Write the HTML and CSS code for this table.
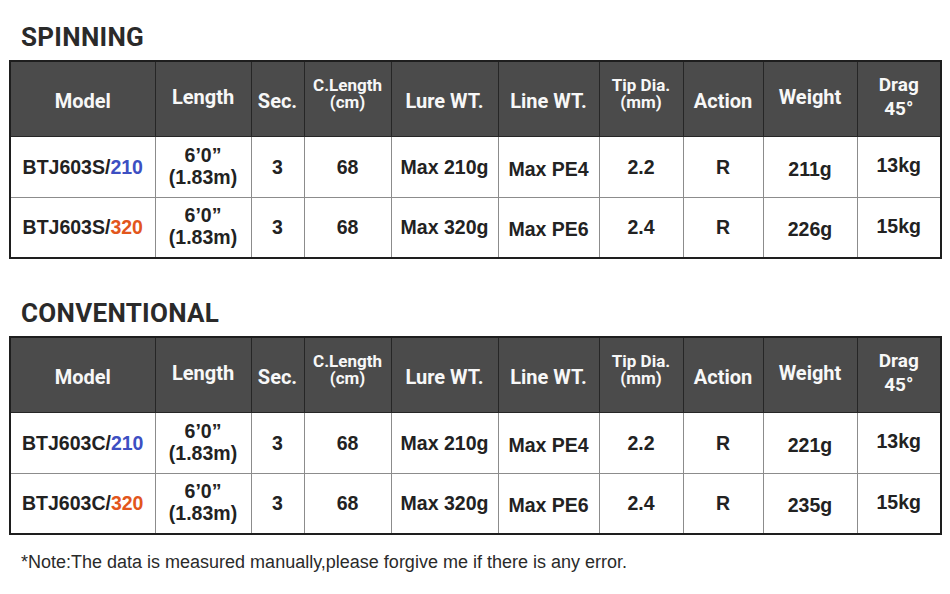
FILE: index.html
```html
<!DOCTYPE html>
<html>
<head>
<meta charset="utf-8">
<link rel="stylesheet" href="styles.css">
</head>
<body>
<div class="page">
  <section class="block">
    <h2 class="title">SPINNING</h2>
    <table class="spec">
      <colgroup>
        <col class="c-model"><col class="c-len"><col class="c-sec"><col class="c-clen"><col class="c-lure">
        <col class="c-line"><col class="c-tip"><col class="c-act"><col class="c-wt"><col class="c-drag">
      </colgroup>
      <thead>
        <tr>
          <th>Model</th>
          <th class="up">Length</th>
          <th>Sec.</th>
          <th class="two">C.Length<br>(cm)</th>
          <th>Lure WT.</th>
          <th>Line WT.</th>
          <th class="two">Tip Dia.<br>(mm)</th>
          <th>Action</th>
          <th class="up">Weight</th>
          <th class="drag">Drag<br>45°</th>
        </tr>
      </thead>
      <tbody>
        <tr>
          <td>BTJ603S/<span class="blue">210</span></td>
          <td class="len">6’0”<br>(1.83m)</td>
          <td>3</td>
          <td>68</td>
          <td>Max 210g</td>
          <td class="dn">Max PE4</td>
          <td>2.2</td>
          <td>R</td>
          <td class="dn">211g</td>
          <td class="up">13kg</td>
        </tr>
        <tr>
          <td>BTJ603S/<span class="orange">320</span></td>
          <td class="len">6’0”<br>(1.83m)</td>
          <td>3</td>
          <td>68</td>
          <td>Max 320g</td>
          <td class="dn">Max PE6</td>
          <td>2.4</td>
          <td>R</td>
          <td class="dn">226g</td>
          <td class="up">15kg</td>
        </tr>
      </tbody>
    </table>
  </section>

  <section class="block second">
    <h2 class="title">CONVENTIONAL</h2>
    <table class="spec">
      <colgroup>
        <col class="c-model"><col class="c-len"><col class="c-sec"><col class="c-clen"><col class="c-lure">
        <col class="c-line"><col class="c-tip"><col class="c-act"><col class="c-wt"><col class="c-drag">
      </colgroup>
      <thead>
        <tr>
          <th>Model</th>
          <th class="up">Length</th>
          <th>Sec.</th>
          <th class="two">C.Length<br>(cm)</th>
          <th>Lure WT.</th>
          <th>Line WT.</th>
          <th class="two">Tip Dia.<br>(mm)</th>
          <th>Action</th>
          <th class="up">Weight</th>
          <th class="drag">Drag<br>45°</th>
        </tr>
      </thead>
      <tbody>
        <tr>
          <td>BTJ603C/<span class="blue">210</span></td>
          <td class="len">6’0”<br>(1.83m)</td>
          <td>3</td>
          <td>68</td>
          <td>Max 210g</td>
          <td class="dn">Max PE4</td>
          <td>2.2</td>
          <td>R</td>
          <td class="dn">221g</td>
          <td class="up">13kg</td>
        </tr>
        <tr>
          <td>BTJ603C/<span class="orange">320</span></td>
          <td class="len">6’0”<br>(1.83m)</td>
          <td>3</td>
          <td>68</td>
          <td>Max 320g</td>
          <td class="dn">Max PE6</td>
          <td>2.4</td>
          <td>R</td>
          <td class="dn">235g</td>
          <td class="up">15kg</td>
        </tr>
      </tbody>
    </table>
  </section>

  <p class="note">*Note:The data is measured manually,please forgive me if there is any error.</p>
</div>
</body>
</html>
```

FILE: styles.css
```css
* { box-sizing: border-box; }
html, body { margin: 0; padding: 0; background: #fff; }
.page {
  width: 950px;
  height: 594px;
  padding: 22px 0 0 9px;
  display: flex;
  flex-direction: column;
}
.block { display: flex; flex-direction: column; }
.second { margin-top: 39px; }
.title {
  margin: 0 0 8px 12px;
  font-family: Roboto, "Noto Sans", sans-serif;
  font-weight: 700;
  font-size: 26px;
  line-height: 30px;
  color: #2a2a2a;
  letter-spacing: 0.3px;
}
.spec {
  width: 931px;
  table-layout: fixed;
  border-collapse: collapse;
  border: 2px solid #1e1e1e;
}
.c-model { width: 145px; }
.c-len { width: 96px; }
.c-sec { width: 53px; }
.c-clen { width: 87px; }
.c-lure { width: 107px; }
.c-line { width: 101px; }
.c-tip { width: 84px; }
.c-act { width: 80px; }
.c-wt { width: 94px; }
.c-drag { width: 84px; }

.spec th {
  height: 75px;
  background: #4b4b4b;
  color: #f7f7f7;
  font-family: Roboto, "Noto Sans", sans-serif;
  font-weight: 700;
  font-size: 20px;
  line-height: 22px;
  text-align: center;
  vertical-align: middle;
  border: 1px solid #262626;
  padding: 4px 0 0 0;
  white-space: nowrap;
}
.spec th.up { padding: 0 0 4px 0; }
.spec th.two {
  font-size: 17px;
  line-height: 17px;
  padding: 0 0 10px 0;
}
.spec th.drag {
  font-size: 19px;
  line-height: 24px;
  padding: 0 0 4px 0;
}
.spec td {
  height: 61px;
  font-family: "Liberation Sans", Arial, sans-serif;
  font-weight: 700;
  font-size: 19.5px;
  line-height: 22px;
  color: #222;
  text-align: center;
  vertical-align: middle;
  border: 1px solid #8c8c8c;
  padding: 0;
  white-space: nowrap;
}
.spec td.len { line-height: 22px; padding-bottom: 2px; }
.spec td.dn { padding-top: 4px; }
.spec td.up { padding-bottom: 3px; }
.blue { color: #3d4fc2; }
.orange { color: #e2561c; }
.note {
  margin: 17px 0 0 12px;
  font-family: "Liberation Sans", Arial, sans-serif;
  font-size: 18px;
  line-height: 20px;
  color: #2a2a2a;
}
```
